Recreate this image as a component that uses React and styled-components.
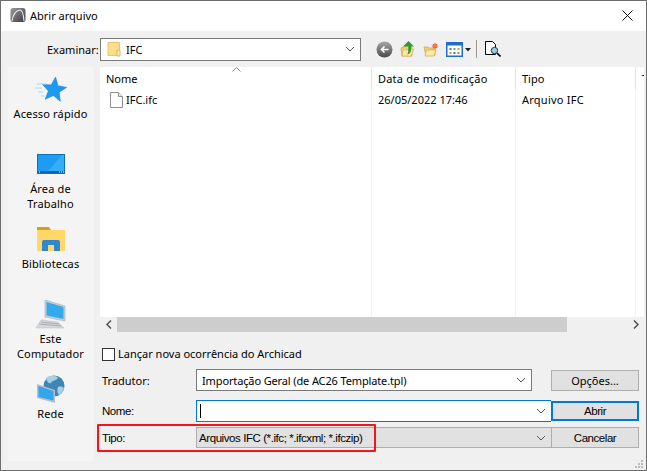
import React from "react";
import styled, { createGlobalStyle } from "styled-components";

const Global = createGlobalStyle`
    html, body { margin: 0; padding: 0; background: #f0f0f0; }
    * { box-sizing: border-box; }
`;

const FONT = `"Noto Sans", "Open Sans", sans-serif`;
const NARROW = `"Liberation Sans", Arial, sans-serif`;

const Dialog = styled.div`
    position: relative;
    width: 647px;
    height: 471px;
    display: flex;
    flex-direction: column;
    background: #f0f0f0;
    border: 1px solid #6d6d6d;
    font-family: ${FONT};
    font-size: 11px;
    color: #000;
    overflow: hidden;
`;

const TitleBar = styled.div`
    height: 30px;
    flex: none;
    background: #fff;
    display: flex;
    align-items: center;
    padding: 0 0 2px 9px;
    gap: 4px;
    font-size: 11px;
`;

const CloseBtn = styled.div`
    margin-left: auto;
    margin-right: 13px;
    display: flex;
`;

const Toolbar = styled.div`
    height: 36px;
    flex: none;
    display: flex;
    align-items: center;
    padding-left: 46px;
`;

const ToolLabel = styled.div`
    width: 53px;
`;

const ComboBox = styled.div`
    height: ${(p) => p.$h || 22}px;
    width: ${(p) => (p.$w ? p.$w + "px" : "auto")};
    display: flex;
    align-items: center;
    justify-content: space-between;
    padding: 0 5px 0 ${(p) => p.$pl || 5}px;
    background: ${(p) => p.$bg || "#fff"};
    border: 1px solid ${(p) => p.$border || "#7a7a7a"};
    ${(p) => (p.$open ? "border-right: none;" : "")}
`;

const ComboValue = styled.div`
    display: flex;
    align-items: center;
    gap: 5px;
    white-space: nowrap;
    letter-spacing: ${(p) => p.$ls || 0}px;
`;

const NarrowText = styled.span`
    font-family: ${NARROW};
    font-size: 11.5px;
    letter-spacing: ${(p) => p.$ls || -0.45}px;
    white-space: nowrap;
`;

const ToolIcons = styled.div`
    display: flex;
    align-items: center;
    margin-left: 15px;
`;

const ToolGroup = styled.div`
    display: flex;
    align-items: center;
    gap: 7px;
`;

const ToolSep = styled.div`
    width: 1px;
    height: 18px;
    background: #9a9a9a;
    margin: 0 8px 0 5px;
`;

const Main = styled.div`
    flex: 1;
    display: flex;
    padding-left: 6px;
    min-height: 0;
`;

const Sidebar = styled.div`
    width: 87px;
    height: 394px;
    background: #f4f4f4;
    flex: none;
    display: grid;
    grid-auto-rows: 75px;
    padding-top: 9px;
    text-align: center;
    line-height: 15px;
    letter-spacing: 0.15px;
`;

const Place = styled.div`
    display: flex;
    flex-direction: column;
    align-items: center;
`;

const PlaceIcon = styled.div`
    height: 30px;
    padding-bottom: ${(p) => p.$lift || 0}px;
    display: flex;
    align-items: center;
    justify-content: center;
`;

const PlaceLabel = styled.div`
    width: ${(p) => (p.$w ? p.$w + "px" : "auto")};
`;

const Right = styled.div`
    margin-left: 6px;
    width: 544px;
    display: flex;
    flex-direction: column;
`;

const FileList = styled.div`
    height: 250px;
    flex: none;
    background: #fff;
    overflow: hidden;
    display: grid;
    grid-template-columns: 272px 144px 120px 8px;
    grid-template-rows: 23px 22px 1fr;
    position: relative;
`;

const HeadCell = styled.div`
    border-right: 1px solid #e5e5e5;
    padding: 4px 0 0 6px;
    white-space: nowrap;
    overflow: hidden;
    letter-spacing: ${(p) => p.$ls || 0}px;
    &:nth-of-type(4n) {
        border-right: none;
    }
`;

const Cell = styled.div`
    border-right: 1px solid #eef3f9;
    padding: 2px 0 0 ${(p) => p.$pl || 6}px;
    display: flex;
    align-items: flex-start;
    gap: 3px;
    white-space: nowrap;
    overflow: hidden;
    letter-spacing: ${(p) => p.$ls || 0}px;
    &:nth-of-type(4n) {
        border-right: none;
    }
`;

const SortArrow = styled.svg`
    position: absolute;
    left: 132px;
    top: 0;
`;

const ScrollBar = styled.div`
    height: 15px;
    flex: none;
    display: flex;
    align-items: center;
    justify-content: space-between;
    background: #f0f0f0;
`;

const ScrollBtn = styled.div`
    width: 17px;
    height: 15px;
    display: flex;
    align-items: center;
    justify-content: center;
`;

const Thumb = styled.div`
    width: 450px;
    height: 15px;
    background: #cdcdcd;
    margin-right: auto;
`;

const CheckRow = styled.label`
    display: flex;
    align-items: center;
    gap: 3px;
    height: 14px;
    margin: 14px 0 0 2px;
`;

const CheckBox = styled.span`
    width: 13px;
    height: 13px;
    margin-top: 2px;
    background: #fff;
    border: 1px solid #333;
`;

const Form = styled.div`
    display: grid;
    grid-template-columns: 96px 355px 88px;
    grid-template-rows: 31px 27px 21px;
    margin-top: 9px;
    align-items: start;
`;

const FieldLabel = styled.div`
    height: 22px;
    display: flex;
    align-items: center;
    padding-left: 2px;
`;

const PushBtn = styled.div`
    height: ${(p) => p.$h || 21}px;
    margin-top: ${(p) => p.$mt || 0}px;
    display: flex;
    align-items: center;
    justify-content: center;
    background: #e1e1e1;
    border: ${(p) => (p.$primary ? "2px solid #0078d7" : "1px solid #adadad")};
`;

const Caret = styled.span`
    width: 1px;
    height: 14px;
    background: #000;
`;

const Highlight = styled.div`
    position: absolute;
    left: 96px;
    top: 423px;
    width: 279px;
    height: 28px;
    border: 2px solid #f5141c;
    border-radius: 1px;
    pointer-events: none;
`;

const Grip = styled.svg`
    position: absolute;
    right: 3px;
    bottom: 2px;
`;

const Chevron = ({ color = "#555" }) => (
    <svg width="10" height="6" viewBox="0 0 10 6">
        <path d="M1 1l4 4 4-4" fill="none" stroke={color} strokeWidth="1" />
    </svg>
);

const AppLogo = () => (
    <svg width="16" height="16" viewBox="0 0 16 16">
        <defs>
            <linearGradient id="lg" x1="0" y1="0" x2="1" y2="1">
                <stop offset="0" stopColor="#9a9aa0" />
                <stop offset="1" stopColor="#3c3c44" />
            </linearGradient>
        </defs>
        <rect x="0.5" y="1" width="15" height="14" rx="2.5" fill="url(#lg)" />
        <path d="M2 14C3 8 6 3.5 10 3c2.5 0 3.5 4 4 11" fill="none" stroke="#e8e8e8" strokeWidth="1.2" />
    </svg>
);

const CloseIcon = () => (
    <svg width="11" height="11" viewBox="0 0 11 11">
        <path d="M.5.5l10 10M10.5.5l-10 10" stroke="#111" strokeWidth="1" fill="none" />
    </svg>
);

const SmallFolder = () => (
    <svg width="14" height="16" viewBox="0 0 14 16">
        <path d="M1 1.5h11.5v13H1z" fill="#fbde8a" stroke="#e9c46a" />
        <path d="M10 9h3v6h-3z" fill="#fff0b8" stroke="#dcb95a" />
    </svg>
);

const FileIcon = () => (
    <svg width="13" height="16" viewBox="0 0 13 16">
        <path d="M.5.5h8l4 4v11H.5z" fill="#fff" stroke="#8f8f8f" />
        <path d="M8.5.5v4h4" fill="#eee" stroke="#8f8f8f" />
    </svg>
);

const StarIcon = () => (
    <svg width="32" height="30" viewBox="0 0 32 30">
        <path
            d="M19 1l3.400 8.300 8.800.6-6.800 5.700 2.200 8.700L19 19.500l-7.600 4.800 2.200-8.700-6.800-5.700 8.800-.6z"
            fill="#1b9bf0"
            stroke="#1783d6"
            strokeWidth=".6"
            transform="rotate(7 19 14)"
        />
        <path d="M2 8h9M0 12h7M3 16h5M6 20h3" stroke="#a6d6f7" strokeWidth="1" />
    </svg>
);

const DesktopIcon = () => (
    <svg width="28" height="20" viewBox="0 0 28 20">
        <rect x=".5" y=".5" width="27" height="19" fill="#1d9bf5" stroke="#0f6fb8" />
        <path d="M11 17L25 1h2v17z" fill="#35aef9" />
        <rect x="1" y="17" width="26" height="2" fill="#0c62a6" />
        <path d="M2 18h1M22 18h1M24 18h1M26 18h1" stroke="#fff" />
    </svg>
);

const LibraryIcon = () => (
    <svg width="28" height="24" viewBox="0 0 28 24">
        <path d="M0 0h12l2 3H0z" fill="#d89f14" />
        <path d="M0 3h28v21H0z" fill="#ffd868" />
        <path d="M5 24V15a2 2 0 012-2h14a2 2 0 012 2v9h-6v-6h-6v6z" fill="#2f87cf" />
    </svg>
);

const ComputerIcon = () => (
    <svg width="32" height="29" viewBox="0 0 32 29">
        <path d="M10 0l20 6v15l-20-4z" fill="#c9ced4" stroke="#a9adb3" strokeWidth=".6" />
        <path d="M11.500 2l17 5v12l-17-3.400z" fill="#35a9ee" />
        <path d="M6 20l17 2 6 6H1z" fill="#d5d7da" stroke="#bdbfc2" strokeWidth=".5" />
        <path d="M6 22l18 2M4 24l22 2" stroke="#9c9fa3" strokeWidth=".8" />
    </svg>
);

const NetworkIcon = () => (
    <svg width="28" height="28" viewBox="0 0 28 28">
        <circle cx="17" cy="11" r="10.500" fill="#3e86b5" />
        <path d="M9 3c3-3 10-3 12 0-2 3-6 2-7 5-3 1-4-2-5-5zM21 12c3-1 5 0 6 1-1 4-3 6-5 7-2-2-2-5-1-8z" fill="#a9cfe4" />
        <path d="M0 9l18 6v13L0 23z" fill="#b9bec4" />
        <path d="M1.500 11l15 5v9.500l-15-3.500z" fill="#2fa6ee" />
    </svg>
);

const BackIcon = () => (
    <svg width="17" height="17" viewBox="0 0 17 17">
        <defs>
            <linearGradient id="bk" x1="0" y1="0" x2="0" y2="1">
                <stop offset="0" stopColor="#a8a8a8" />
                <stop offset="1" stopColor="#4a4a4a" />
            </linearGradient>
        </defs>
        <circle cx="8.500" cy="8.500" r="8" fill="url(#bk)" />
        <path d="M12.500 8.500H6M8.500 5.500l-3 3 3 3" fill="none" stroke="#fff" strokeWidth="1.600" />
    </svg>
);

const UpIcon = () => (
    <svg width="16" height="17" viewBox="0 0 16 17">
        <path d="M1 7l8-3v2h3v9H2z" fill="#f2cf6e" stroke="#c9a23e" strokeWidth=".7" />
        <path d="M2 15l1-6 11-1-3 7z" fill="#fde9a6" stroke="#d2ad4c" strokeWidth=".7" />
        <path d="M8.500 0L14 5.500h-3V9c0 2.500-1.500 4-4 4.500 1-1.200 1.300-2.500 1.300-4V5.500H3z" fill="#2f9a2c" />
    </svg>
);

const NewFolderIcon = () => (
    <svg width="16" height="15" viewBox="0 0 16 15">
        <path d="M1 5h4l1 1h6v7.500H3z" fill="#f2cf6e" stroke="#c9a23e" strokeWidth=".7" />
        <path d="M2 14l1.500-6H13l-2 6z" fill="#fde9a6" stroke="#d2ad4c" strokeWidth=".7" />
        <circle cx="12" cy="4" r="2.500" fill="#f0552a" />
        <path d="M12 .5v7M8.500 4h7" stroke="#f7a184" strokeWidth=".7" />
    </svg>
);

const ViewIcon = () => (
    <svg width="25" height="15" viewBox="0 0 25 15">
        <rect x=".75" y=".75" width="15.500" height="13.500" fill="#fff" stroke="#1c6fd0" strokeWidth="1.500" />
        <rect x="1" y="1" width="15" height="2.500" fill="#1c6fd0" />
        <path d="M3.500 6h2v2h-2z" fill="#4a78c4" />
        <path d="M7.500 6h2v2h-2z" fill="#6aa84f" />
        <path d="M11.500 6h2v2h-2z" fill="#e69138" />
        <path d="M3.500 10h2v2h-2z" fill="#e69138" />
        <path d="M7.500 10h2v2h-2z" fill="#4a78c4" />
        <path d="M11.500 10h2v2h-2z" fill="#6aa84f" />
        <path d="M19 6h6l-3 3.500z" fill="#222" />
    </svg>
);

const FindIcon = () => (
    <svg width="16" height="16" viewBox="0 0 16 16">
        <path d="M.5.500h7l3 3v10H.5z" fill="#fff" stroke="#000" />
        <circle cx="9.500" cy="9.500" r="3.200" fill="#8fd0ea" stroke="#333" />
        <path d="M12 12l3.500 3.500" stroke="#000" strokeWidth="1.600" />
    </svg>
);

const places = [
    { icon: <StarIcon />, label: "Acesso rápido" },
    { icon: <DesktopIcon />, label: "Área de Trabalho", width: 60, lift: 4 },
    { icon: <LibraryIcon />, label: "Bibliotecas", lift: 4 },
    { icon: <ComputerIcon />, label: "Este Computador", width: 72, lift: 4 },
    { icon: <NetworkIcon />, label: "Rede", lift: 4 }
];

export default function App() {
    return (
        <Dialog>
            <Global />
            <TitleBar>
                <AppLogo />
                Abrir arquivo
                <CloseBtn>
                    <CloseIcon />
                </CloseBtn>
            </TitleBar>
            <Toolbar>
                <ToolLabel>Examinar:</ToolLabel>
                <ComboBox $w={261} $h={23} $pl={6}>
                    <ComboValue>
                        <SmallFolder />
                        IFC
                    </ComboValue>
                    <Chevron />
                </ComboBox>
                <ToolIcons>
                    <ToolGroup>
                        <BackIcon />
                        <UpIcon />
                        <NewFolderIcon />
                        <ViewIcon />
                    </ToolGroup>
                    <ToolSep />
                    <FindIcon />
                </ToolIcons>
            </Toolbar>
            <Main>
                <Sidebar>
                    {places.map((p) => (
                        <Place key={p.label}>
                            <PlaceIcon $lift={p.lift}>{p.icon}</PlaceIcon>
                            <PlaceLabel $w={p.width}>{p.label}</PlaceLabel>
                        </Place>
                    ))}
                </Sidebar>
                <Right>
                    <FileList>
                        <SortArrow width="9" height="5" viewBox="0 0 9 5">
                            <path d="M.5 4.500l4-4 4 4" fill="none" stroke="#888" />
                        </SortArrow>
                        <HeadCell>Nome</HeadCell>
                        <HeadCell $ls={0.2}>Data de modificação</HeadCell>
                        <HeadCell>Tipo</HeadCell>
                        <HeadCell>T</HeadCell>
                        <Cell $pl={10}>
                            <FileIcon />
                            IFC.ifc
                        </Cell>
                        <Cell>26/05/2022 17:46</Cell>
                        <Cell $ls={0.25}>Arquivo IFC</Cell>
                        <Cell />
                        <Cell />
                        <Cell />
                        <Cell />
                        <Cell />
                    </FileList>
                    <ScrollBar>
                        <ScrollBtn>
                            <svg width="6" height="9" viewBox="0 0 6 9">
                                <path d="M5 .5l-4 4 4 4" fill="none" stroke="#505050" strokeWidth="1.500" />
                            </svg>
                        </ScrollBtn>
                        <Thumb />
                        <ScrollBtn>
                            <svg width="6" height="9" viewBox="0 0 6 9">
                                <path d="M1 .5l4 4-4 4" fill="none" stroke="#505050" strokeWidth="1.500" />
                            </svg>
                        </ScrollBtn>
                    </ScrollBar>
                    <CheckRow>
                        <CheckBox />
                        Lançar nova ocorrência do Archicad
                    </CheckRow>
                    <Form>
                        <FieldLabel>Tradutor:</FieldLabel>
                        <ComboBox $w={336}>
                            <ComboValue $ls={-0.13}>Importação Geral (de AC26 Template.tpl)</ComboValue>
                            <Chevron />
                        </ComboBox>
                        <PushBtn $mt={1}>Opções...</PushBtn>
                        <FieldLabel>
                            <NarrowText>Nome:</NarrowText>
                        </FieldLabel>
                        <ComboBox $border="#0078d7" $pl={3} $open>
                            <Caret />
                            <Chevron />
                        </ComboBox>
                        <PushBtn $primary $mt={1} $h={20}>
                            <NarrowText>Abrir</NarrowText>
                        </PushBtn>
                        <FieldLabel>
                            <NarrowText>Tipo:</NarrowText>
                        </FieldLabel>
                        <ComboBox $bg="#e1e1e1" $border="#adadad" $h={21} $pl={2} $open>
                            <ComboValue>
                                <NarrowText $ls={-0.42}>Arquivos IFC (*.ifc; *.ifcxml; *.ifczip)</NarrowText>
                            </ComboValue>
                            <Chevron />
                        </ComboBox>
                        <PushBtn>
                            <NarrowText>Cancelar</NarrowText>
                        </PushBtn>
                    </Form>
                </Right>
            </Main>
            <Highlight />
            <Grip width="8" height="8" viewBox="0 0 8 8">
                <path d="M6 0h2v2H6zM3 3h2v2H3zM6 3h2v2H6zM0 6h2v2H0zM3 6h2v2H3zM6 6h2v2H6z" fill="#bcbcbc" />
            </Grip>
        </Dialog>
    );
}
